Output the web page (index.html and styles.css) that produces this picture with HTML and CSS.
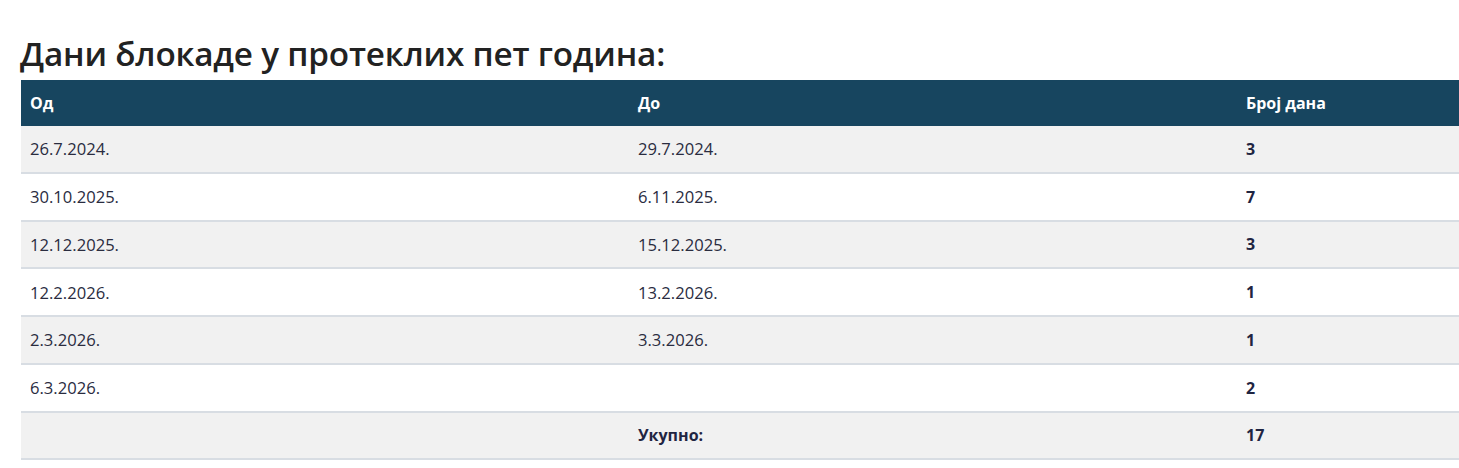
FILE: index.html
```html
<!DOCTYPE html>
<html lang="sr">
<head>
<meta charset="utf-8">
<title>Дани блокаде</title>
<link rel="stylesheet" href="styles.css">
</head>
<body>
<div class="page">
  <h2 class="title">Дани блокаде у протеклих пет година:</h2>
  <table class="days">
    <thead>
      <tr><th>Од</th><th>До</th><th>Број дана</th></tr>
    </thead>
    <tbody>
      <tr><td>26.7.2024.</td><td>29.7.2024.</td><td class="num">3</td></tr>
      <tr><td>30.10.2025.</td><td>6.11.2025.</td><td class="num">7</td></tr>
      <tr><td>12.12.2025.</td><td>15.12.2025.</td><td class="num">3</td></tr>
      <tr><td>12.2.2026.</td><td>13.2.2026.</td><td class="num">1</td></tr>
      <tr><td>2.3.2026.</td><td>3.3.2026.</td><td class="num">1</td></tr>
      <tr><td>6.3.2026.</td><td></td><td class="num">2</td></tr>
      <tr><td></td><td class="num">Укупно:</td><td class="num">17</td></tr>
    </tbody>
  </table>
</div>
</body>
</html>
```
FILE: styles.css
```css
html, body {
  margin: 0;
  padding: 0;
  background: #ffffff;
  overflow: hidden;
}
.page {
  padding: 0 0 0 21px;
  font-family: "Open Sans", "Noto Sans", sans-serif;
  color: #2a2c3f;
}
.title {
  margin: 27px 0 1px -1px;
  font-size: 33.3px;
  line-height: 52px;
  font-weight: 600;
  color: #222222;
  letter-spacing: -0.2px;
}
.days {
  width: 1824px;
  table-layout: fixed;
  border-collapse: collapse;
  font-size: 16.6px;
}
.days th {
  background: #17455f;
  color: #ffffff;
  text-align: left;
  font-weight: 700;
  height: 46px;
  padding: 0 9px;
  font-size: 16px;
}
.days td {
  height: 45.75px;
  padding: 0 9px;
  border-bottom: 2px solid #d8dde3;
  vertical-align: middle;
}
.days tbody tr:nth-child(odd) td {
  background: #f1f1f1;
}
.days td.num {
  font-weight: 700;
  font-size: 16px;
  color: #1f2542;
}
```
